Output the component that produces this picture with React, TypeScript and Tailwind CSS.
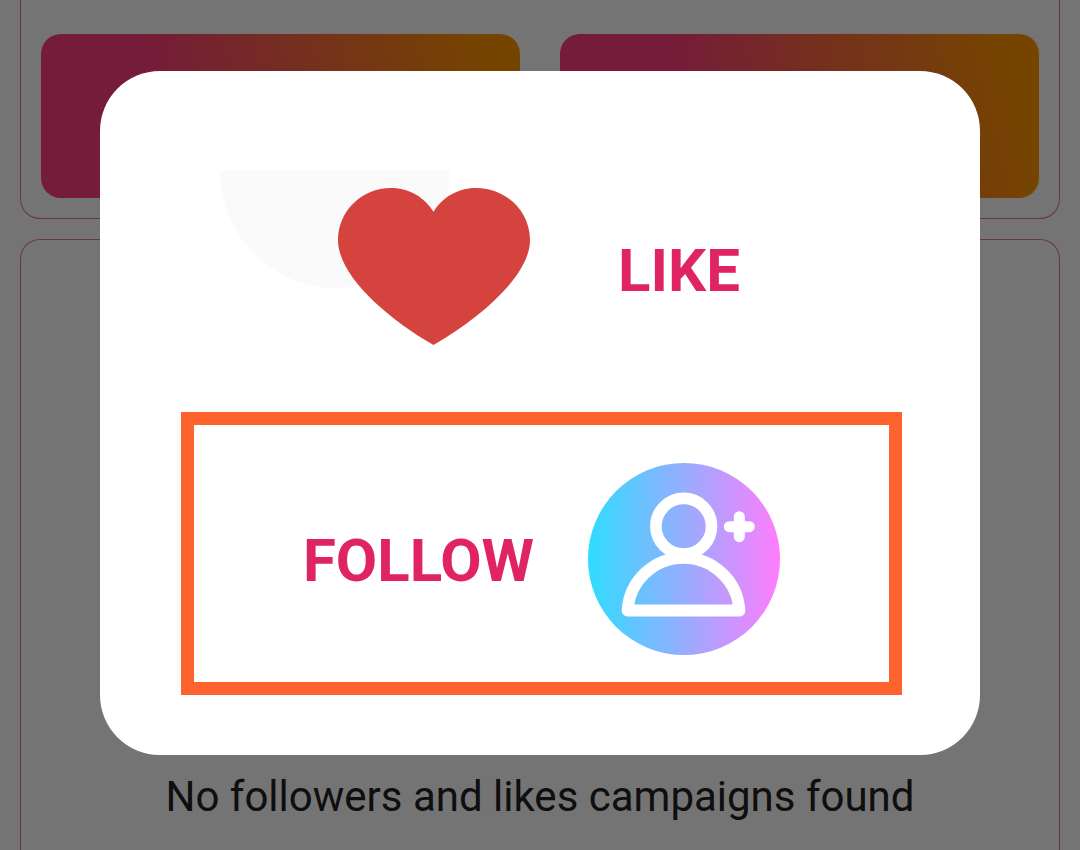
import React, { useState } from 'react';

type Action = 'like' | 'follow';

const HeartIcon: React.FC = () => (
  <svg className="shrink-0" width="310" height="198" viewBox="0 0 310 198" aria-hidden="true">
    <path d="M0 0H230A115 118 0 0 1 0 0Z" fill="#fafafa" />
    <path
      d="M213.5 41.7C205 28 190 18 171 18C142 18 118 41 118 70C118 105 165 147 213.5 175C262 147 310 105 310 70C310 41 286 18 256 18C237 18 222 28 213.5 41.7Z"
      fill="#d5433e"
    />
  </svg>
);

const FollowIcon: React.FC = () => (
  <svg className="shrink-0" width="192" height="192" viewBox="0 0 192 192" fill="none" aria-hidden="true">
    <defs>
      <linearGradient id="followGradient" x1="0" y1="0" x2="1" y2="0">
        <stop offset="0" stopColor="#2fdcff" />
        <stop offset="1" stopColor="#ff7dfd" />
      </linearGradient>
    </defs>
    <circle cx="96" cy="96" r="96" fill="url(#followGradient)" />
    <g stroke="#fff" strokeLinecap="round" strokeLinejoin="round">
      <circle cx="95.7" cy="63.2" r="27.8" strokeWidth="11.6" />
      <path d="M39.6 147.5A56 56 0 0 1 151.4 147.5Z" strokeWidth="11.8" />
      <path d="M151.3 53.7V73.7M141.3 63.7H161.3" strokeWidth="11" />
    </g>
  </svg>
);

const GradientTile: React.FC = () => (
  <div className="h-41 rounded-[20px] bg-linear-[75deg] from-[#ff3d7e] from-28% via-[#ff6745] via-56% to-[#ff9600] to-93%" />
);

const CampaignsPage: React.FC = () => (
  <main className="flex h-screen flex-col gap-5 overflow-hidden px-5">
    <section className="rounded-b-[20px] border border-t-0 border-[#e6728f] px-5 pt-[34px] pb-5">
      <div className="grid grid-cols-2 gap-10">
        <GradientTile />
        <GradientTile />
      </div>
    </section>
    <section className="flex flex-1 flex-col justify-end rounded-t-[20px] border border-b-0 border-[#e6728f] pb-7">
      <p className="text-center text-[42px] leading-[50px] text-[#212121]">
        No followers and likes campaigns found
      </p>
    </section>
  </main>
);

const App: React.FC = () => {
  const [selected, setSelected] = useState<Action>('follow');

  return (
    <div className="bg-[#fdfdfd] font-['Roboto',sans-serif]">
      <CampaignsPage />

      <div className="fixed inset-0 flex items-start bg-black/54 px-[100px] pt-[71px]">
        <div
          role="dialog"
          aria-modal="true"
          aria-label="Campaign type"
          className="flex w-full flex-col gap-11 rounded-[60px] bg-white pt-[99px] pr-[78px] pb-[60px] pl-[81px]"
        >
          <button
            type="button"
            onClick={() => setSelected('like')}
            className="flex items-center gap-[88px] pl-[39px] text-[60px] leading-[70px] font-bold text-[#e02365]"
          >
            <HeartIcon />
            <span className="pt-1">LIKE</span>
          </button>
          <button
            type="button"
            aria-pressed={selected === 'follow'}
            onClick={() => setSelected('follow')}
            className="flex h-[283px] items-center justify-center gap-[54px] border-[13px] border-[#ff632d] pt-2.5 text-[60px] leading-[70px] font-bold text-[#e02365]"
          >
            <span className="pt-1">FOLLOW</span>
            <FollowIcon />
          </button>
        </div>
      </div>
    </div>
  );
};

export default App;
